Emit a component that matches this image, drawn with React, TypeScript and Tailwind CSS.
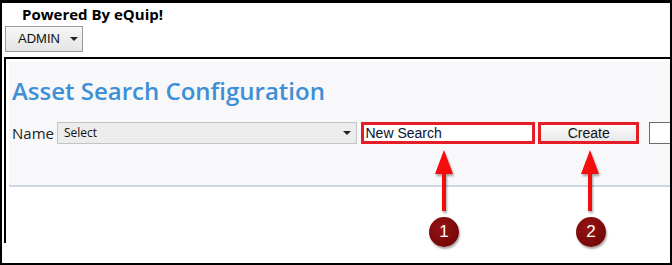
import React from "react";

const sans = "font-['Open_Sans',sans-serif]";
const arial = "font-['Liberation_Sans',Arial,sans-serif]";

function Arrow({ x }: { x: number }) {
  return (
    <svg
      className="absolute top-[144px] drop-shadow-[1px_2px_1px_rgba(0,0,0,0.35)]"
      style={{ left: x - 10 }}
      width="20"
      height="66"
      viewBox="0 0 20 66"
    >
      <polygon points="10,3 19,27 12,27 12,64 8,64 8,27 1,27" fill="#f40d0d" />
    </svg>
  );
}

function Badge({ x, n }: { x: number; n: string }) {
  return (
    <div
      className={`absolute top-[214px] flex h-[30px] w-[30px] items-center justify-center rounded-full bg-[radial-gradient(circle_at_40%_35%,#951212,#6a0404)] text-[17px] text-white shadow-[1px_2px_2px_rgba(0,0,0,0.35)] ${arial}`}
      style={{ left: x - 15 }}
    >
      {n}
    </div>
  );
}

export default function App() {
  return (
    <div className="relative h-[265px] w-[672px] overflow-hidden border-2 border-t-[3px] border-black bg-white">
      <div className={`h-[23px] pl-[20px] pt-[1px] text-[15px] leading-[20px] font-bold text-black ${sans}`}>
        Powered By eQuip!
      </div>

      <button
        className={`ml-[3px] flex h-[26px] w-[78px] items-center gap-[10px] border border-[#9a9a9a] bg-gradient-to-b from-[#f7f7f7] to-[#e4e4e4] pl-[12px] text-[13px] text-[#111] ${arial}`}
      >
        ADMIN
        <span className="h-0 w-0 border-x-[4px] border-t-[4px] border-x-transparent border-t-[#222]" />
      </button>

      <div className="ml-[2px] mt-[5px] h-[186px] border-l-2 border-t-2 border-black pl-[3px] pt-[3px]">
        <div className="h-[125px] w-[700px] border-b-2 border-[#c9d7e7] bg-[#f8f7fa] pl-[3px] pt-[13px]">
          <div className={`h-[32px] text-[24px] leading-[32px] font-semibold text-[#3d8fd6] ${sans}`}>
            Asset Search Configuration
          </div>

          <div className="mt-[15px] flex h-[22px] items-center">
            <span className={`w-[45px] text-[15px] text-[#222] ${sans}`}>Name</span>
            <div className="flex h-[22px] w-[300px] items-center justify-between border border-[#c4c4c4] bg-[#ececec] pl-[6px] pr-[5px]">
              <span className={`text-[12px] text-[#111] ${sans}`}>Select</span>
              <span className="h-0 w-0 border-x-[4px] border-t-[4px] border-x-transparent border-t-[#222]" />
            </div>
            <div className={`ml-[4px] flex h-[22px] w-[175px] items-center border-[3px] border-[#e51d27] bg-white pl-[2px] text-[14px] text-[#0a1230] ${arial}`}>
              New Search
            </div>
            <div className={`ml-[3px] flex h-[22px] w-[101px] items-center justify-center border-[3px] border-[#e51d27] bg-gradient-to-b from-[#fbfbfb] to-[#e8e8e8] text-[14px] text-[#111] ${arial}`}>
              Create
            </div>
            <div className="ml-[10px] h-[22px] w-[60px] border border-[#6b6b6b] bg-white" />
          </div>
        </div>
      </div>

      <Arrow x={442} />
      <Arrow x={588} />
      <Badge x={442} n="1" />
      <Badge x={589} n="2" />
    </div>
  );
}
